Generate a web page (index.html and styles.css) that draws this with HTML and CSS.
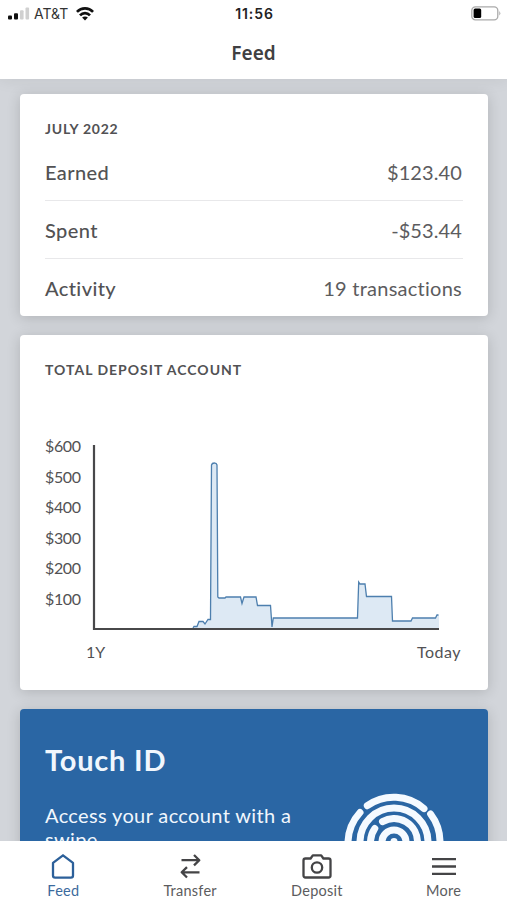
FILE: index.html
```html
<!DOCTYPE html>
<html lang="en">
    <head>
        <meta charset="utf-8">
        <title>Feed</title>
        <link rel="stylesheet" href="styles.css">
    </head>
    <body>
        <header>
            <div class="status-bar">
                <div class="carrier">
                    <svg width="22" height="14" viewBox="0 0 22 14">
                        <rect x="0" y="8.5" width="4" height="4" rx="1" fill="#111"/>
                        <rect x="6" y="6.2" width="4" height="6.3" rx="1" fill="#111"/>
                        <rect x="12" y="3.2" width="3.6" height="9.3" rx="1" fill="#d0d0d0"/>
                        <rect x="17.5" y="0.5" width="3.6" height="12" rx="1" fill="#d0d0d0"/>
                    </svg>
                    <span class="carrier-name">AT&amp;T</span>
                    <svg width="18" height="14" viewBox="0 0 18 14" fill="none" stroke="#111" stroke-width="2.7">
                        <path d="M0.9 4.9 C5.4 .2 12.6 .2 17.1 4.9"/>
                        <path d="M4 8.3 C6.8 5.3 11.2 5.3 14 8.3"/>
                        <path d="M9 13.4 L6.1 10.5 C7.7 9 10.3 9 11.9 10.5 Z" fill="#111" stroke="none"/>
                    </svg>
                </div>
                <div class="clock">11:56</div>
                <svg class="battery" width="30" height="15" viewBox="0 0 30 15">
                    <rect x="0.8" y="0.8" width="26" height="13" rx="3.6" fill="#fff" stroke="#aaa" stroke-width="1.3"/>
                    <rect x="2.6" y="2.6" width="7.6" height="9.4" rx="1.5" fill="#000"/>
                    <path d="M28.3 5 Q30.4 7.3 28.3 9.6 Z" fill="#aaa"/>
                </svg>
            </div>
            <h1>Feed</h1>
        </header>
        <main>
            <section class="card summary">
                <h2 class="july">JULY 2022</h2>
                <div class="row"><span class="label">Earned</span><span class="value">$123.40</span></div>
                <div class="row"><span class="label">Spent</span><span class="value">-$53.44</span></div>
                <div class="row"><span class="label">Activity</span><span class="value count">19 transactions</span></div>
            </section>
            <section class="card account">
                <h2 class="total">TOTAL DEPOSIT ACCOUNT</h2>
                <div class="chart">
                    <div class="y-axis">
                        <span>$600</span>
                        <span>$500</span>
                        <span>$400</span>
                        <span>$300</span>
                        <span>$200</span>
                        <span>$100</span>
                    </div>
                    <svg width="350" height="190" viewBox="90 442 350 190">
                        <path fill="#dde9f4" d="M193 629 L194 626.5 H197 L199 621.5 H203 L205 624 L208 619.5 H210.5 L211.5 465 Q212 463 214.3 463 Q216.6 463 217 465 L217.8 597 L219 598 H225 L226 597 H240.5 L242 603.5 L244 597 H256 L257.5 605.5 H270.5 L272 627 L273.3 618 H357.5 L358.7 582 L360 584 H365 L366.5 596.5 H391.5 L392.5 621 H411 L412.5 618 H435.5 L437 615 H439 V629 Z"/>
                        <path class="line" d="M193 628 L194 626.5 H197 L199 621.5 H203 L205 624 L208 619.5 H210.5 L211.5 465 Q212 463 214.3 463 Q216.6 463 217 465 L217.8 597 L219 598 H225 L226 597 H240.5 L242 603.5 L244 597 H256 L257.5 605.5 H270.5 L272 627 L273.3 618 H357.5 L358.7 582 L360 584 H365 L366.5 596.5 H391.5 L392.5 621 H411 L412.5 618 H435.5 L437 615 H438.5"/>
                        <path class="axis" d="M94 445 V629 H439"/>
                    </svg>
                </div>
                <div class="x-axis"><span>1Y</span><span class="today">Today</span></div>
            </section>
            <section class="card promo">
                <div class="promo-text">
                    <h3>Touch ID</h3>
                    <p>Access your account with a swipe.</p>
                </div>
                <svg class="finger" width="100" height="100" viewBox="0 0 100 100">
                    <path d="M23.3 13.7 A46 46 0 0 1 80 16.6"/>
                    <path d="M16 20.5 A46 46 0 0 0 4 50 V60"/>
                    <path d="M86.6 22 A46 46 0 0 1 96 50 V60"/>
                    <path d="M16 60 V50 A34 34 0 0 1 84 50 V60"/>
                    <path d="M38.5 29.6 A23.5 23.5 0 0 1 73.5 50 V60"/>
                    <path d="M30.8 36.5 A23.5 23.5 0 0 0 26.5 50 V60"/>
                    <path d="M38 60 V50 A12 12 0 0 1 62 50 V60"/>
                    <path d="M50 49.5 V60"/>
                </svg>
            </section>
        </main>
        <nav>
            <a class="tab active">
                <svg width="28" height="28" viewBox="0 0 28 28"><path d="M14 2.3 L24 9.8 V22.5 Q24 24.6 21.9 24.6 H6.1 Q4 24.6 4 22.5 V9.8 Z"/></svg>
                <span>Feed</span>
            </a>
            <a class="tab">
                <svg width="28" height="28" viewBox="0 0 28 28"><path d="M5.5 7.2 H23 M18 2 L23.3 7.2 L18 12.4 M23.5 19.3 H6 M11 14.1 L5.7 19.3 L11 24.5"/></svg>
                <span>Transfer</span>
            </a>
            <a class="tab">
                <svg width="30" height="28" viewBox="0 0 30 28"><path d="M3.5 5.5 H8.6 L10.8 2.3 H19.2 L21.4 5.5 H26.5 Q28.5 5.5 28.5 7.5 V22.5 Q28.5 24.5 26.5 24.5 H3.5 Q1.5 24.5 1.5 22.5 V7.5 Q1.5 5.5 3.5 5.5 Z"/><circle cx="15" cy="14.5" r="5.2"/></svg>
                <span>Deposit</span>
            </a>
            <a class="tab">
                <svg width="28" height="28" viewBox="0 0 28 28"><path d="M2 6.2 H26 M2 13.5 H26 M2 20.8 H26"/></svg>
                <span>More</span>
            </a>
        </nav>
    </body>
</html>
```
FILE: styles.css
```css
*{
    box-sizing: border-box;
}
body{
    margin: 0;
    height: 900px;
    overflow: hidden;
    display: flex;
    flex-direction: column;
    background: #d2d5da;
    color: #525254;
    font-family: Lato, "Noto Sans", sans-serif;
    font-variant-ligatures: none;
}
h1, h2, h3, p{
    margin: 0;
}
header{
    height: 79px;
    flex: none;
    background: #fff;
    box-shadow: 0 0 16px rgba(0,0,0,0.08);
}
.status-bar{
    display: grid;
    grid-template-columns: 1fr auto 1fr;
    align-items: center;
    height: 27px;
    padding: 0 6px 0 8px;
}
.carrier{
    display: flex;
    align-items: center;
    gap: 4px;
}
.carrier-name{
    font: 14px/20px Inter, sans-serif;
    letter-spacing: 0;
    color: #333;
    width: 38px;
}
.clock{
    font: 600 14px/20px Inter, sans-serif;
    letter-spacing: 0.9px;
    color: #222;
}
.battery{
    justify-self: end;
}
h1{
    font-family: "Noto Sans", sans-serif;
    font-size: 19px;
    font-weight: 600;
    line-height: 26px;
    margin-top: 13px;
    text-align: center;
    color: #404042;
}
main{
    flex: 1;
    min-height: 0;
    overflow: hidden;
    padding: 15px 19px 0 20px;
}
.card{
    background: #fff;
    border-radius: 4px;
    margin-bottom: 19px;
    padding: 0 25px;
    box-shadow: 0 2px 14px rgba(0,0,0,0.16);
}
h2{
    font-size: 14px;
    font-weight: 700;
    line-height: 20px;
}
.july{
    letter-spacing: 0.75px;
}
.total{
    letter-spacing: 1px;
}
.summary{
    height: 222px;
    padding-top: 25px;
}
.row{
    display: flex;
    justify-content: space-between;
    align-items: center;
    height: 58px;
    border-bottom: 1px solid #e8e8ea;
    font-size: 20px;
}
.row:first-of-type{
    margin-top: 4px;
}
.row:last-child{
    border: none;
}
.label{
    font-weight: 500;
    letter-spacing: 0.4px;
}
.value{
    color: #5c5c5e;
    letter-spacing: 0.1px;
    padding-right: 1px;
}
.count{
    letter-spacing: 0.25px;
}
.account{
    height: 355px;
    padding-top: 25px;
}
.chart{
    display: flex;
    margin-top: 62px;
}
.y-axis{
    display: flex;
    flex-direction: column;
    width: 45px;
    margin-top: -11px;
    font-size: 16px;
    letter-spacing: -0.4px;
}
.y-axis span{
    line-height: 30.5px;
}
.line{
    fill: none;
    stroke: #4d7fae;
    stroke-width: 1.3;
}
.axis{
    fill: none;
    stroke: #48484a;
    stroke-width: 2.2;
}
.x-axis{
    display: flex;
    justify-content: space-between;
    padding: 0 2px 0 41px;
    font-size: 16px;
    line-height: 20px;
    margin-top: 10px;
}
.today{
    letter-spacing: 0.5px;
}
.promo{
    display: flex;
    height: 240px;
    background: #2a66a4;
    color: #f1f7fd;
}
.promo-text{
    width: 299px;
    flex: none;
}
h3{
    font-size: 29px;
    font-weight: 700;
    line-height: 36px;
    letter-spacing: 0.8px;
    margin-top: 33px;
}
p{
    font-size: 20px;
    line-height: 24px;
    letter-spacing: 0.36px;
    margin-top: 25px;
    width: 270px;
}
.finger{
    flex: none;
    margin-top: 83px;
    fill: none;
    stroke: #f5faff;
    stroke-width: 7;
    stroke-linecap: round;
}
nav{
    flex: none;
    height: 59px;
    background: #fff;
    display: grid;
    grid-template-columns: repeat(4, 1fr);
}
.tab{
    display: flex;
    flex-direction: column;
    align-items: center;
    padding-top: 12px;
    font-size: 14.5px;
    line-height: 20px;
    letter-spacing: 0.25px;
    color: #5c5c5e;
}
.tab svg{
    fill: none;
    stroke: #444446;
    stroke-width: 2.3;
    stroke-linejoin: round;
}
.active{
    color: #3b6a9d;
}
.active svg{
    stroke: #2c609a;
}
```
